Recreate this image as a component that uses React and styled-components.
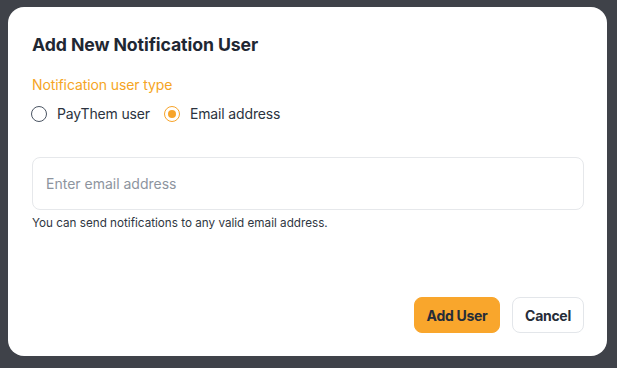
import React, { useState } from "react";
import styled, { createGlobalStyle } from "styled-components";

const Global = createGlobalStyle`
  html, body { margin: 0; padding: 0; }
  body {
    background: #3f4249;
    font-family: Inter, "Noto Sans", sans-serif;
    -webkit-font-smoothing: antialiased;
  }
`;

const Overlay = styled.div`
  width: 617px;
  height: 368px;
  box-sizing: border-box;
  padding: 7px 10px 12px 8px;
  display: flex;
  align-items: flex-start;
`;

const Modal = styled.div`
  width: 599px;
  height: 349px;
  box-sizing: border-box;
  background: #ffffff;
  border-radius: 16px;
  padding: 27px 23px 23px 24px;
  display: flex;
  flex-direction: column;
`;

const Title = styled.h2`
  margin: 0;
  font-size: 17.7px;
  font-weight: 700;
  line-height: 22px;
  color: #1f2733;
  letter-spacing: -0.1px;
`;

const Label = styled.div`
  margin-top: 19px;
  font-size: 14px;
  line-height: 20px;
  color: #f5a524;
  letter-spacing: -0.1px;
`;

const RadioRow = styled.div`
  display: flex;
  align-items: center;
  gap: 14px;
  margin-top: 9px;
  margin-left: -1px;
`;

const RadioOption = styled.label`
  display: flex;
  align-items: center;
  gap: 10px;
  font-size: 14px;
  line-height: 20px;
  color: #2b3340;
  letter-spacing: -0.15px;
  cursor: pointer;
`;

const RadioCircle = styled.span`
  width: 16px;
  height: 16px;
  box-sizing: border-box;
  border-radius: 50%;
  border: 1.5px solid ${(p) => (p.$checked ? "#f7a42a" : "#4b5563")};
  display: flex;
  align-items: center;
  justify-content: center;
  &::after {
    content: "";
    width: 8px;
    height: 8px;
    border-radius: 50%;
    background: #f7a42a;
    display: ${(p) => (p.$checked ? "block" : "none")};
  }
`;

const Input = styled.input`
  margin-top: 33px;
  height: 53px;
  box-sizing: border-box;
  width: 100%;
  border: 1px solid #e6e8eb;
  border-radius: 8px;
  padding: 0 13px;
  font-family: inherit;
  font-size: 14px;
  color: #2b3340;
  outline: none;
  &::placeholder { color: #8d949e; }
`;

const Helper = styled.div`
  margin-top: 5px;
  font-size: 11.7px;
  line-height: 16px;
  color: #2f3742;
`;

const Footer = styled.div`
  margin-top: auto;
  display: flex;
  justify-content: flex-end;
  gap: 12px;
`;

const Button = styled.button`
  height: 36px;
  box-sizing: border-box;
  padding: 0 ${(p) => (p.$primary ? "10px" : "10px")};
  min-width: ${(p) => (p.$primary ? "86px" : "72px")};
  border-radius: 8px;
  font-family: inherit;
  font-size: 14px;
  font-weight: 700;
  letter-spacing: -0.3px;
  color: #262d38;
  background: ${(p) => (p.$primary ? "#f9a62c" : "#ffffff")};
  border: 1px solid ${(p) => (p.$primary ? "#f9a62c" : "#e3e6ea")};
  cursor: pointer;
`;

export default function App() {
  const [type, setType] = useState("email");
  return (
    <>
      <Global />
      <Overlay>
        <Modal>
          <Title>Add New Notification User</Title>
          <Label>Notification user type</Label>
          <RadioRow>
            <RadioOption onClick={() => setType("paythem")}>
              <RadioCircle $checked={type === "paythem"} />
              PayThem user
            </RadioOption>
            <RadioOption onClick={() => setType("email")}>
              <RadioCircle $checked={type === "email"} />
              Email address
            </RadioOption>
          </RadioRow>
          <Input placeholder="Enter email address" />
          <Helper>You can send notifications to any valid email address.</Helper>
          <Footer>
            <Button $primary>Add User</Button>
            <Button>Cancel</Button>
          </Footer>
        </Modal>
      </Overlay>
    </>
  );
}
